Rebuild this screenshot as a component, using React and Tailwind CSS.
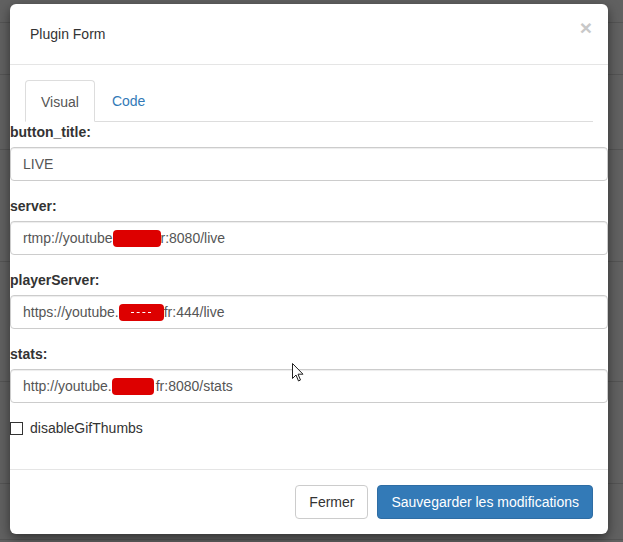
import React from "react";

const ROWS = [23, 52, 75, 112, 120, 102, 56];

function Redacted({ width, children }) {
  return (
    <span
      className="relative inline-block h-[17px] rounded-[4px] bg-[#dd0000] align-[-3px] text-center text-[10px] leading-[17px] text-white"
      style={{ width }}
    >
      {children}
    </span>
  );
}

function Field({ label, children }) {
  return (
    <div className="mb-[15px]">
      <label className="mb-[5px] block text-[14px] font-bold leading-[20px] text-[#333]">{label}</label>
      <div className="flex h-[34px] items-center rounded-[4px] border border-[#ccc] bg-white px-[12px] text-[14px] text-[#555] shadow-[inset_0_1px_1px_rgba(0,0,0,0.075)]">
        {children}
      </div>
    </div>
  );
}

export default function App() {
  return (
    <div className="relative h-[542px] w-[623px] overflow-hidden bg-[#616161] font-['Liberation_Sans',Arial,sans-serif]">
      {/* page underneath the backdrop */}
      <div className="flex flex-col">
        {ROWS.map((h, i) => (
          <div key={i} className="border-b border-[#545454]" style={{ height: h }} />
        ))}
      </div>

      {/* modal */}
      <div className="absolute left-[10px] top-[4px] flex h-[530px] w-[598px] flex-col rounded-[6px] bg-white shadow-[0_4px_12px_rgba(0,0,0,0.5)]">
        <div className="flex h-[61px] items-center justify-between border-b border-[#e5e5e5] pl-[20px] pr-[16px]">
          <h4 className="text-[14px] leading-[20px] text-[#333]">Plugin Form</h4>
          <button type="button" className="mb-[14px] text-[21px] font-bold leading-none text-[#c8c8c8]">
            ×
          </button>
        </div>

        <div className="px-[15px] pt-[15px]">
          <ul className="flex border-b border-[#ddd] text-[14px] leading-[20px]">
            <li className="-mb-px mr-[2px] rounded-t-[4px] border border-[#ddd] border-b-white bg-white px-[15px] pb-[9px] pt-[11px] text-[#555]">
              Visual
            </li>
            <li className="px-[15px] pb-[9px] pt-[11px] text-[#337ab7]">Code</li>
          </ul>
        </div>

        <form>
          <Field label="button_title:">LIVE</Field>
          <Field label="server:">
            <span>rtmp://youtube</span>
            <Redacted width={48} />
            <span>r:8080/live</span>
          </Field>
          <Field label="playerServer:">
            <span>https://youtube.</span>
            <Redacted width={45}>
              <span className="absolute left-[12px] top-[8px] h-px w-[20px] border-t border-dashed border-white" />
            </Redacted>
            <span>fr:444/live</span>
          </Field>
          <Field label="stats:">
            <span>http://youtube.</span>
            <Redacted width={42} />
            <span className="ml-[2px]">fr:8080/stats</span>
          </Field>
          <div className="mt-[2px] flex items-center text-[14px] leading-[20px] text-[#333]">
            <span className="mr-[7px] inline-block h-[13px] w-[13px] border border-[#333] bg-white" />
            <span>disableGifThumbs</span>
          </div>
        </form>

        <div className="mt-auto flex justify-end gap-[9px] border-t border-[#e5e5e5] p-[15px] text-[14px]">
          <button
            type="button"
            className="h-[34px] rounded-[4px] border border-[#ccc] bg-white px-[13px] text-[#333]"
          >
            Fermer
          </button>
          <button
            type="button"
            className="h-[34px] rounded-[4px] border border-[#2e6da4] bg-[#337ab7] px-[13px] text-white"
          >
            Sauvegarder les modifications
          </button>
        </div>
      </div>

      {/* mouse pointer */}
      <svg className="absolute left-[292px] top-[363px]" width="12" height="19" viewBox="0 0 12 19">
        <path
          d="M0.5 0.5 L0.5 15.5 L4 12 L6.5 18 L8.5 17 L6 11.2 L11 11.2 Z"
          fill="white"
          stroke="#222"
          strokeWidth="1"
          strokeLinejoin="round"
        />
      </svg>
    </div>
  );
}
